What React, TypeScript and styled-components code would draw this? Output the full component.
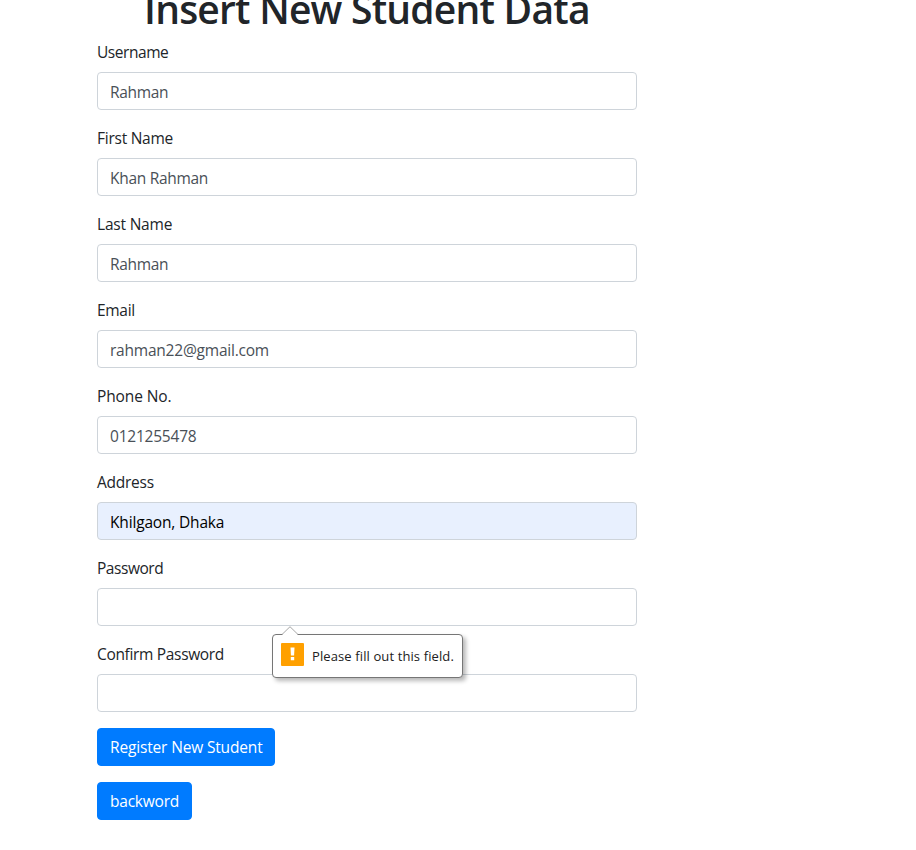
import React from "react";
import styled, { createGlobalStyle } from "styled-components";

const GlobalStyle = createGlobalStyle`
  *, *::before, *::after { box-sizing: border-box; }
  body {
    margin: 0;
    background: #fff;
    color: #212529;
    font-family: "Open Sans", "Noto Sans", sans-serif;
    font-size: 15.5px;
    line-height: 24px;
    overflow: hidden;
  }
`;

const Page = styled.main`
  height: 850px;
  padding-left: 97px;
`;

const Form = styled.form`
  width: 540px;
`;

const Title = styled.h1`
  margin: -15px 0 7px;
  height: 48px;
  padding-left: 47px;
  font-size: 39px;
  line-height: 48px;
  font-weight: 600;
  letter-spacing: -0.77px;
  white-space: nowrap;
`;

const Group = styled.div`
  position: relative;
  margin-bottom: 16px;
`;

const Label = styled.label<{ $tracking: number }>`
  display: block;
  height: 24px;
  margin-bottom: 8px;
  padding-top: 1px;
  line-height: 23px;
  letter-spacing: ${(p) => p.$tracking}px;
`;

const Field = styled.input<{ $autofilled: boolean; $tracking: number }>`
  display: block;
  width: 100%;
  height: 38px;
  padding: 1px 12px 0;
  border: 1px solid #ced4da;
  border-radius: 4px;
  outline: none;
  background: ${(p) => (p.$autofilled ? "#e8f0fe" : "#fff")};
  color: ${(p) => (p.$autofilled ? "#000" : "#495057")};
  font: inherit;
  letter-spacing: ${(p) => p.$tracking}px;
`;

const Button = styled.button<{ $width: number; $tracking: number }>`
  display: block;
  width: ${(p) => p.$width}px;
  height: 38px;
  margin-bottom: 16px;
  padding: 0 0 0 12px;
  border: 1px solid #007bff;
  border-radius: 4px;
  background: #007bff;
  color: #fff;
  font: inherit;
  text-align: left;
  white-space: nowrap;
  letter-spacing: ${(p) => p.$tracking}px;
`;

const Tip = styled.div`
  position: absolute;
  z-index: 1;
  left: 175px;
  top: 78px;
  display: flex;
  align-items: flex-start;
  width: 191px;
  height: 44px;
  padding: 8px 0 0 8px;
  gap: 8px;
  border: 1px solid #767676;
  border-radius: 4px;
  background: #fff;
  box-shadow: 3px 3px 4px rgba(0, 0, 0, 0.28);
  color: #212121;
  font-size: 13px;
  line-height: 27px;
  letter-spacing: 0.11px;
  white-space: nowrap;
`;

const Arrow = styled.svg`
  position: absolute;
  left: 8px;
  top: -9px;
`;

const fields = [
  { label: "Username", value: "Rahman", labelTracking: -0.45, tracking: -0.35 },
  { label: "First Name", value: "Khan Rahman", labelTracking: -0.25, tracking: -0.3 },
  { label: "Last Name", value: "Rahman", labelTracking: -0.2, tracking: -0.35 },
  { label: "Email", value: "rahman22@gmail.com", labelTracking: -0.3, tracking: -0.22 },
  { label: "Phone No.", value: "0121255478", labelTracking: -0.12, tracking: -0.22 },
  { label: "Address", value: "Khilgaon, Dhaka", labelTracking: -0.25, tracking: -0.17, autofilled: true },
  { label: "Password", value: "", labelTracking: -0.45, tracking: 0, invalid: true },
  { label: "Confirm Password", value: "", labelTracking: -0.33, tracking: 0 },
];

function ValidationTip() {
  return (
    <Tip role="alert">
      <Arrow width="18" height="10" viewBox="0 0 18 10">
        <path d="M1 9 9 1l8 8v1H1z" fill="#fff" />
        <path d="M1 8.5 9 .7l8 7.8" fill="none" stroke="#a6a6a6" />
      </Arrow>
      <svg width="23" height="23" viewBox="0 0 23 23">
        <rect width="23" height="23" rx="1" fill="#ffa000" />
        <path d="M9.5 4.5h4l-.4 8h-3.2zM9.8 14h3.4v3.2H9.8z" fill="#fff" />
      </svg>
      <span>Please fill out this field.</span>
    </Tip>
  );
}

export default function App() {
  return (
    <Page>
      <GlobalStyle />
      <Form noValidate>
        <Title>Insert New Student Data</Title>
        {fields.map((f) => (
          <Group key={f.label}>
            <Label htmlFor={f.label} $tracking={f.labelTracking}>{f.label}</Label>
            <Field
              id={f.label}
              defaultValue={f.value}
              $autofilled={!!f.autofilled}
              $tracking={f.tracking}
            />
            {f.invalid && <ValidationTip />}
          </Group>
        ))}
        <Button type="button" $width={178} $tracking={-0.16}>Register New Student</Button>
        <Button type="button" $width={95} $tracking={-0.22}>backword</Button>
      </Form>
    </Page>
  );
}
